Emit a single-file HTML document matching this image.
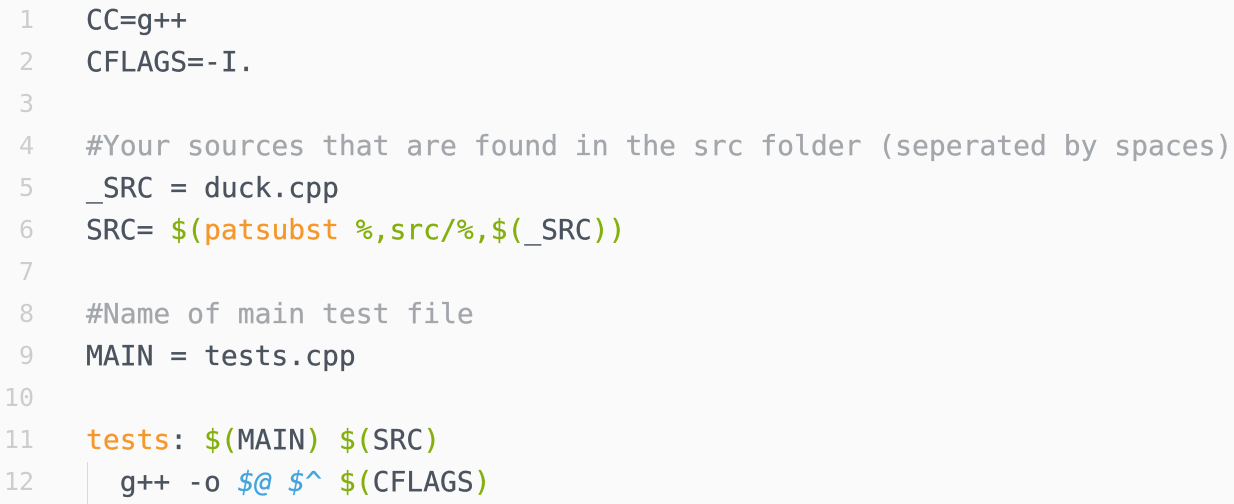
<!DOCTYPE html>
<html><head><meta charset="utf-8"><style>
html,body{margin:0;padding:0;background:#fafafa;width:1234px;height:504px;overflow:hidden}
.l{position:absolute;left:0;height:42px;line-height:42px;white-space:pre;font-family:"DejaVu Sans Mono","Liberation Mono",monospace;font-size:28px;color:#4a535e;-webkit-text-stroke:0.3px currentColor}
.n{position:absolute;left:0;width:34px;text-align:right;font-size:25px;color:#cdcdcd;-webkit-text-stroke:0}
.c{position:absolute;left:86px}
.g{color:#84af0c}.o{color:#f5972a}.b{color:#44a5dd;font-style:italic}.m{color:#a3a7ab}
.guide{position:absolute;left:87px;top:462px;width:1px;height:42px;background:#d8d8d8}
</style></head><body>
<div class="l" style="top:-1px"><span class="n">1</span><span class="c">CC=g++</span></div>
<div class="l" style="top:41px"><span class="n">2</span><span class="c">CFLAGS=-I.</span></div>
<div class="l" style="top:83px"><span class="n">3</span></div>
<div class="l" style="top:125px"><span class="n">4</span><span class="c m">#Your sources that are found in the src folder (seperated by spaces)</span></div>
<div class="l" style="top:167px"><span class="n">5</span><span class="c">_SRC = duck.cpp</span></div>
<div class="l" style="top:209px"><span class="n">6</span><span class="c">SRC= <span class="g">$(</span><span class="o">patsubst</span> <span class="g">%,src/%,$(</span>_SRC<span class="g">))</span></span></div>
<div class="l" style="top:251px"><span class="n">7</span></div>
<div class="l" style="top:293px"><span class="n">8</span><span class="c m">#Name of main test file</span></div>
<div class="l" style="top:335px"><span class="n">9</span><span class="c">MAIN = tests.cpp</span></div>
<div class="l" style="top:377px"><span class="n">10</span></div>
<div class="l" style="top:419px"><span class="n">11</span><span class="c"><span class="o">tests</span>: <span class="g">$(</span>MAIN<span class="g">)</span> <span class="g">$(</span>SRC<span class="g">)</span></span></div>
<div class="guide"></div>
<div class="l" style="top:461px"><span class="n">12</span><span class="c">  g++ -o <span class="b">$@</span> <span class="b">$^</span> <span class="g">$(</span>CFLAGS<span class="g">)</span></span></div>
</body></html>
